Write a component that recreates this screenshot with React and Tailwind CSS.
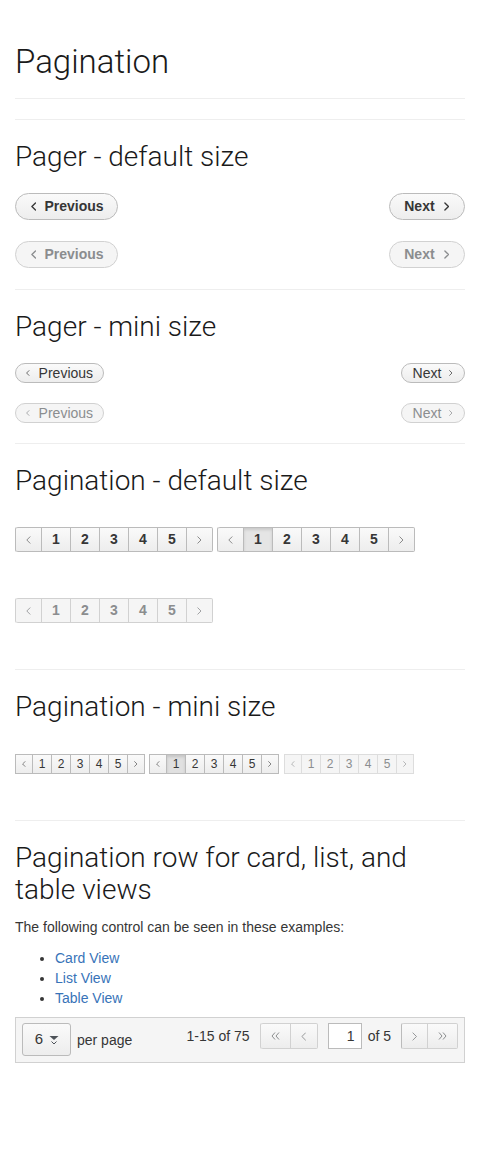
import React from "react";

const head = "font-['Roboto','Liberation_Sans',sans-serif] font-light text-[#1a1a1a]";

const ChevL = ({ size = 8, w = 1.6 }) => (
    <svg width={size * 0.6} height={size} viewBox="0 0 6 10" fill="none">
        <polyline points="5,1 1,5 5,9" stroke="currentColor" strokeWidth={w} strokeLinecap="round" strokeLinejoin="round" />
    </svg>
);

const ChevR = ({ size = 8, w = 1.6 }) => (
    <svg width={size * 0.6} height={size} viewBox="0 0 6 10" fill="none">
        <polyline points="1,1 5,5 1,9" stroke="currentColor" strokeWidth={w} strokeLinecap="round" strokeLinejoin="round" />
    </svg>
);

const DblL = () => (
    <svg width="9" height="8" viewBox="0 0 9 8" fill="none">
        <polyline points="4,0.5 1,4 4,7.5" stroke="currentColor" strokeWidth="1" />
        <polyline points="8,0.5 5,4 8,7.5" stroke="currentColor" strokeWidth="1" />
    </svg>
);

const DblR = () => (
    <svg width="9" height="8" viewBox="0 0 9 8" fill="none">
        <polyline points="1,0.5 4,4 1,7.5" stroke="currentColor" strokeWidth="1" />
        <polyline points="5,0.5 8,4 5,7.5" stroke="currentColor" strokeWidth="1" />
    </svg>
);

const Hr = ({ className = "" }) => <div className={`h-px bg-[#eeeeee] ${className}`} />;

const PagerDefault = ({ disabled }) => {
    const cls = disabled
        ? "border-[#d1d1d1] bg-[#f5f5f5] text-[#8b8d8f]"
        : "border-[#bbbbbb] bg-linear-to-b from-[#fafafa] to-[#ededed] text-[#363636]";
    return (
        <div className="flex justify-between">
            <div className={`flex items-center h-[27px] pl-[15px] pr-[13px] gap-[8px] rounded-full border text-[14px] font-bold ${cls}`}>
                <ChevL size={9} w={1.5} />
                <span>Previous</span>
            </div>
            <div className={`flex items-center h-[27px] pl-[14px] pr-[15px] gap-[9px] rounded-full border text-[14px] font-bold ${cls}`}>
                <span>Next</span>
                <ChevR size={9} w={1.5} />
            </div>
        </div>
    );
};

const PagerMini = ({ disabled }) => {
    const cls = disabled
        ? "border-[#d1d1d1] bg-[#f5f5f5] text-[#8b8d8f]"
        : "border-[#bbbbbb] bg-linear-to-b from-[#fafafa] to-[#ededed] text-[#363636]";
    return (
        <div className="flex justify-between">
            <div className={`flex items-center h-[20px] pl-[10px] pr-[10px] gap-[9px] rounded-full border text-[14px] ${cls}`}>
                <ChevL size={6} w={1.2} />
                <span>Previous</span>
            </div>
            <div className={`flex items-center h-[20px] pl-[11px] pr-[11px] gap-[8px] rounded-full border text-[14px] ${cls}`}>
                <span>Next</span>
                <ChevR size={6} w={1.2} />
            </div>
        </div>
    );
};

const PaginationDefault = ({ active, disabled }) => {
    const base = disabled
        ? "border-[#d1d1d1] bg-[#f5f5f5] text-[#8b8d8f]"
        : "border-[#bbbbbb] bg-linear-to-b from-[#fafafa] to-[#ededed] text-[#363636]";
    const item = "flex items-center justify-center h-[25px] border-y border-r";
    return (
        <div className={`flex rounded-[2px] border-l ${disabled ? "border-[#d1d1d1]" : "border-[#bbbbbb]"}`}>
            <div className={`${item} w-[26px] rounded-l-[2px] ${base} ${disabled ? "" : "text-[#707070]"}`}>
                <ChevL size={8} w={1} />
            </div>
            {[1, 2, 3, 4, 5].map((n) => (
                <div
                    key={n}
                    className={`${item} w-[29px] text-[14px] font-bold ${
                        active === n && !disabled
                            ? "border-[#bbbbbb] bg-[#e5e5e5] text-[#363636] shadow-[inset_0_2px_3px_rgba(0,0,0,0.12)]"
                            : base
                    }`}
                >
                    {n}
                </div>
            ))}
            <div className={`${item} w-[26px] rounded-r-[2px] ${base} ${disabled ? "" : "text-[#707070]"}`}>
                <ChevR size={8} w={1} />
            </div>
        </div>
    );
};

const PaginationMini = ({ active, disabled }) => {
    const base = disabled
        ? "border-[#dddddd] bg-[#f5f5f5] text-[#8b8d8f]"
        : "border-[#bbbbbb] bg-linear-to-b from-[#fafafa] to-[#ededed] text-[#363636]";
    const item = "flex items-center justify-center h-[20px] border-y border-r";
    return (
        <div className={`flex border-l ${disabled ? "border-[#dddddd]" : "border-[#bbbbbb]"}`}>
            <div className={`${item} w-[17px] ${base} text-[#8b8d8f]`}>
                <ChevL size={6} w={1} />
            </div>
            {[1, 2, 3, 4, 5].map((n) => (
                <div
                    key={n}
                    className={`${item} w-[19px] text-[12px] ${
                        active === n && !disabled
                            ? "border-[#bbbbbb] bg-[#e0e0e0] text-[#363636] shadow-[inset_0_2px_3px_rgba(0,0,0,0.12)]"
                            : base
                    }`}
                >
                    {n}
                </div>
            ))}
            <div className={`${item} w-[17px] ${base} text-[#8b8d8f]`}>
                <ChevR size={6} w={1} />
            </div>
        </div>
    );
};

const PaginationRow = () => {
    const btn = "flex items-center justify-center h-[26px] border-y border-r border-[#d1d1d1] bg-linear-to-b from-[#fafafa] to-[#ededed] text-[#8b8d8f]";
    return (
        <div className="flex items-start justify-between h-[46px] mt-[9px] px-[6px] pt-[5px] border border-[#d1d1d1] bg-[#f5f5f5] text-[14px] text-[#363636]">
            <div className="flex items-center gap-[6px]">
                <div className="flex items-center justify-center gap-[6px] w-[49px] h-[33px] rounded-[3px] border border-[#bbbbbb] bg-linear-to-b from-[#fafafa] to-[#ededed] text-[15px] pl-[1px]">
                    <span>6</span>
                    <svg width="10" height="10" viewBox="0 0 10 10" fill="none">
                        <polygon points="0.5,1 9.5,1 5,5" fill="#4d5258" />
                        <polyline points="2.5,6.5 5,9 7.5,6.5" stroke="#4d5258" strokeWidth="1" />
                    </svg>
                </div>
                <span className="mt-[1px]">per page</span>
            </div>
            <div className="flex items-center">
                <span className="mr-[10px]">1-15 of 75</span>
                <div className="flex rounded-[2px] border-l border-[#d1d1d1]">
                    <div className={`${btn} w-[30px] rounded-l-[2px]`}>
                        <DblL />
                    </div>
                    <div className={`${btn} w-[27px] rounded-r-[2px]`}>
                        <ChevL size={9} w={1} />
                    </div>
                </div>
                <div className="flex items-center justify-end ml-[10px] w-[34px] h-[26px] pr-[6px] border border-[#bbbbbb] bg-white">
                    1
                </div>
                <span className="ml-[6px]">of 5</span>
                <div className="flex ml-[10px] rounded-[2px] border-l border-[#bbbbbb]">
                    <div className={`${btn} w-[26px] rounded-l-[2px] border-[#bbbbbb] text-[#4d5258]`}>
                        <ChevR size={9} w={1} />
                    </div>
                    <div className={`${btn} w-[30px] rounded-r-[2px] border-[#bbbbbb] text-[#4d5258]`}>
                        <DblR />
                    </div>
                </div>
            </div>
        </div>
    );
};

export default function App() {
    return (
        <div className="bg-white min-h-[1163px] px-[15px] font-['Liberation_Sans',Arial,sans-serif] text-[#363636]">
            <div className="pt-[42px] pb-[16px] border-b border-[#eeeeee]">
                <h1 className={`${head} text-[33px] leading-[40px]`}>Pagination</h1>
            </div>
            <Hr className="mt-[20px]" />

            <h2 className={`${head} text-[28px] leading-[32px] mt-[21px]`}>Pager - default size</h2>
            <div className="mt-[20px] flex flex-col gap-[21px]">
                <PagerDefault />
                <PagerDefault disabled />
            </div>
            <Hr className="mt-[21px]" />

            <h2 className={`${head} text-[28px] leading-[32px] mt-[21px]`}>Pager - mini size</h2>
            <div className="mt-[20px] flex flex-col gap-[20px]">
                <PagerMini />
                <PagerMini disabled />
            </div>
            <Hr className="mt-[20px]" />

            <h2 className={`${head} text-[28px] leading-[32px] mt-[21px]`}>Pagination - default size</h2>
            <div className="mt-[30px] flex gap-[4px]">
                <PaginationDefault />
                <PaginationDefault active={1} />
            </div>
            <div className="mt-[46px] flex">
                <PaginationDefault disabled />
            </div>
            <Hr className="mt-[46px]" />

            <h2 className={`${head} text-[28px] leading-[32px] mt-[21px]`}>Pagination - mini size</h2>
            <div className="mt-[31px] flex gap-[4px]">
                <PaginationMini />
                <PaginationMini active={1} />
                <div className="ml-[1px]">
                    <PaginationMini disabled />
                </div>
            </div>
            <Hr className="mt-[46px]" />

            <h2 className={`${head} text-[28px] leading-[32px] mt-[21px]`}>
                Pagination row for card, list, and table views
            </h2>
            <p className="mt-[11px] text-[14px] leading-[20px]">
                The following control can be seen in these examples:
            </p>
            <ul className="mt-[11px] pl-[40px] list-disc text-[14px] leading-[20px]">
                <li>
                    <a className="text-[#3873b8]" href="#">Card View</a>
                </li>
                <li>
                    <a className="text-[#3873b8]" href="#">List View</a>
                </li>
                <li>
                    <a className="text-[#3873b8]" href="#">Table View</a>
                </li>
            </ul>
            <PaginationRow />
        </div>
    );
}
